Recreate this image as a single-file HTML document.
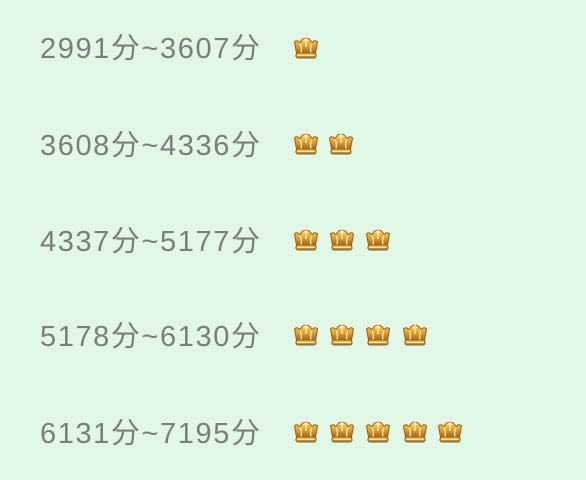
<html><head><style>
body{margin:0;background:#e2f8e6;width:586px;height:480px;overflow:hidden;font-family:"Liberation Sans","Noto Sans CJK SC",sans-serif;position:relative;}
.r{position:absolute;left:40px;height:40px;line-height:40px;font-size:29px;letter-spacing:1.6px;color:#7d7d7d;white-space:nowrap;}
.c{position:absolute;width:26px;height:24px;}
</style></head><body>
<svg width="0" height="0" style="position:absolute"><defs>
<linearGradient id="g" x1="0" y1="0" x2="0" y2="1"><stop offset="0" stop-color="#f6d67a"/><stop offset="0.6" stop-color="#d69a2c"/><stop offset="1" stop-color="#a8661a"/></linearGradient>
<symbol id="cr" viewBox="0 0 26 24">
<path d="M3.5 18 L1.5 7 Q4 4 7 8 Q9 3 13 3 Q17 3 19 8 Q22 4 24.5 7 L22.5 18 Z" fill="url(#g)" stroke="#9a5c14" stroke-width="1"/>
<path d="M13 0.5 V12 M10.5 5 H15.5 M7 8 Q9 12 8 18 M19 8 Q17 12 18 18" stroke="#fff3c0" stroke-width="1.2" fill="none"/>
<rect x="3" y="18" width="20" height="5" rx="2" fill="url(#g)" stroke="#9a5c14" stroke-width="1"/>
<path d="M4.5 20.5 H21.5" stroke="#fff3c0" stroke-width="1"/>
</symbol></defs></svg>
<div class="r" style="top:29px">2991分~3607分</div>
<div class="r" style="top:126px">3608分~4336分</div>
<div class="r" style="top:222px">4337分~5177分</div>
<div class="r" style="top:317px">5178分~6130分</div>
<div class="r" style="top:414px">6131分~7195分</div>
<svg class="c" style="left:293px;top:35px"><use href="#cr" width="26" height="24"/></svg>
<svg class="c" style="left:293px;top:131px"><use href="#cr" width="26" height="24"/></svg><svg class="c" style="left:328px;top:131px"><use href="#cr" width="26" height="24"/></svg>
<svg class="c" style="left:293px;top:227px"><use href="#cr" width="26" height="24"/></svg><svg class="c" style="left:329px;top:227px"><use href="#cr" width="26" height="24"/></svg><svg class="c" style="left:365px;top:227px"><use href="#cr" width="26" height="24"/></svg>
<svg class="c" style="left:293px;top:322px"><use href="#cr" width="26" height="24"/></svg><svg class="c" style="left:329px;top:322px"><use href="#cr" width="26" height="24"/></svg><svg class="c" style="left:365px;top:322px"><use href="#cr" width="26" height="24"/></svg><svg class="c" style="left:402px;top:322px"><use href="#cr" width="26" height="24"/></svg>
<svg class="c" style="left:293px;top:419px"><use href="#cr" width="26" height="24"/></svg><svg class="c" style="left:329px;top:419px"><use href="#cr" width="26" height="24"/></svg><svg class="c" style="left:365px;top:419px"><use href="#cr" width="26" height="24"/></svg><svg class="c" style="left:402px;top:419px"><use href="#cr" width="26" height="24"/></svg><svg class="c" style="left:437px;top:419px"><use href="#cr" width="26" height="24"/></svg>
</body></html>
